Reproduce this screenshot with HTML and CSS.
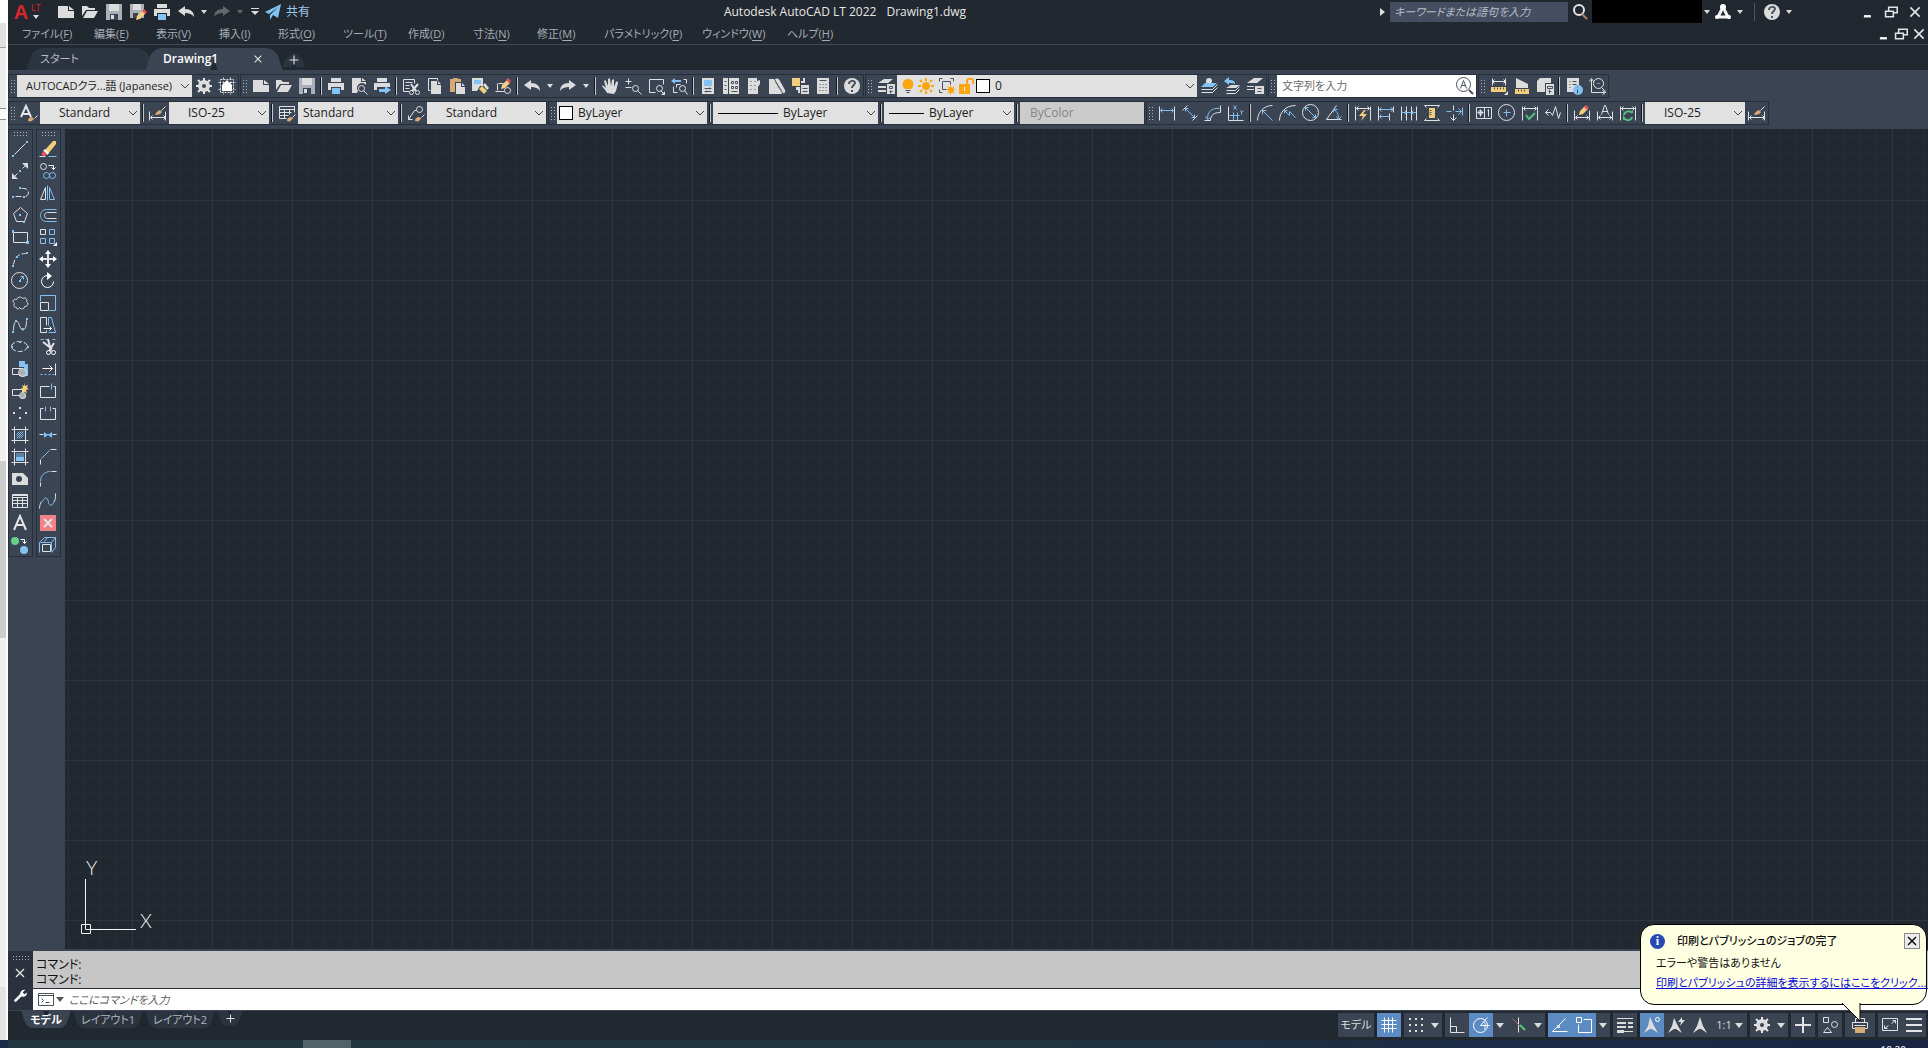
FILE: index.html
```html
<!DOCTYPE html>
<html lang="ja">
<head>
<meta charset="utf-8">
<title>Autodesk AutoCAD LT 2022 - Drawing1.dwg</title>
<link rel="stylesheet" href="styles.css">
</head>
<body>
<svg class="sprite" aria-hidden="true">
  <!-- files and printing -->
  <symbol id="new" viewBox="0 0 18 18"><path class="f" d="M1 3h10v5h6v7H1zM12 3l5 4h-5z"/></symbol>
  <symbol id="open" viewBox="0 0 18 18"><path class="f" d="M1 3h5l2 2h6v2H5l-4 6zM6 8h11l-4 7H2z"/></symbol>
  <symbol id="save" viewBox="0 0 18 18"><path class="g" d="M1 1h16v16H1z"/><path class="f" d="M4 1h10v7H4z"/><path class="d" d="M5 11h8v6H5z"/><path class="f" d="M6 12h3v4H6z"/></symbol>
  <symbol id="saveas" viewBox="0 0 18 18"><path class="g" d="M1 1h14v14H1z"/><path class="f" d="M4 1h8v6H4z"/><path class="d" d="M4 10h5v5H4z"/><path class="y" d="M7 17l1-4 6-6 3 3-6 6z"/><path class="r" d="M13 8l2-2 3 3-2 2z"/></symbol>
  <symbol id="print" viewBox="0 0 18 18"><path class="f" d="M4 1h10v4H4zM1 6h16v7h-3v-3H4v3H1z"/><path class="fb" d="M5 11h8v6H5z"/></symbol>
  <symbol id="preview" viewBox="0 0 18 18"><path class="f" d="M2 1h9v4h5v3a5 5 0 0 0-8 6l-1 2H2zM12 1l4 3h-4z"/><circle cx="11" cy="11" r="3"/><path d="M13 13l4 4"/></symbol>
  <symbol id="publish" viewBox="0 0 18 18"><path class="f" d="M4 1h10v4H4zM1 6h16v4H4v3H1z"/><path class="fb" d="M6 12h6V9l6 4-6 4v-2H6z"/></symbol>
  <!-- editing -->
  <symbol id="cut" viewBox="0 0 18 18"><path d="M1 2h11v4M1 2v12h6M3 5h7M3 8h4M3 11h4"/><path class="w2" d="M9 7l5 7M16 7l-6 7"/><circle cx="9" cy="15" r="2"/><circle cx="15" cy="15" r="2"/></symbol>
  <symbol id="copyclip" viewBox="0 0 18 18"><path d="M12 3V1H3v12h2"/><path class="f" d="M6 4h6v4h4v9H6zM13 4l3 3h-3z"/></symbol>
  <symbol id="paste" viewBox="0 0 18 18"><path class="t" d="M2 2h3V1h5v1h3v3H7v10H2z"/><path class="f" d="M8 6h5v4h4v7H8zM14 6l3 3h-3z"/></symbol>
  <symbol id="match" viewBox="0 0 18 18"><path class="f" d="M1 1h11v8H9l-3 5H1z"/><path class="fb" d="M3 3h7v4H3z"/><path class="y" d="M8 12l3-3 5 5-3 3z"/><path class="f" d="M12 8l2-2 4 5-2 2z"/></symbol>
  <symbol id="blockedit" viewBox="0 0 18 18"><path d="M4 6h5M3 6v7M1 14h9"/><circle cx="13" cy="13" r="3"/><path class="y" d="M7 12l1-4 5-5 3 3-5 5z"/><path class="r" d="M12 3l2-2 3 3-2 2z"/></symbol>
  <symbol id="undo" viewBox="0 0 18 18"><path class="f" d="M1 8l7-5v3c6 0 9 3 9 8-2-3-5-4-9-4v3z"/></symbol>
  <symbol id="redo" viewBox="0 0 18 18"><path class="f" d="M17 8l-7-5v3C4 6 1 9 1 14c2-3 5-4 9-4v3z"/></symbol>
  <symbol id="down" viewBox="0 0 8 8"><path class="f" d="M1 2h6L4 6z"/></symbol>
  <symbol id="custom" viewBox="0 0 10 10"><path class="f" d="M1 1h8v1H1zM1 4h8L5 8z"/></symbol>
  <symbol id="send" viewBox="0 0 18 18"><path class="fb" d="M1 9l16-8-3 14-5-3-3 5v-5l8-8-9 7z"/></symbol>
  <!-- viewing -->
  <symbol id="pan" viewBox="0 0 18 18"><path class="f" d="M6 16C5 13 2 11 1 9c1-1 2 0 4 2L3 4c1-1 2-1 2 0l2 5V2c1-1 2-1 2 0l1 7 1-6c1-1 2-1 2 0v7l2-5c1-1 2 0 2 1l-2 8-2 3z"/></symbol>
  <symbol id="zoompm" viewBox="0 0 18 18"><path d="M1 4h6M4 1v6M1 10h6M13 13l4 4"/><circle cx="11" cy="11" r="3"/></symbol>
  <symbol id="zoomwin" viewBox="0 0 18 18"><path d="M16 7V2H2v13h6M13 13l3 3"/><circle cx="12" cy="11" r="3"/><path class="f" d="M18 14v4h-4z"/></symbol>
  <symbol id="zoomprev" viewBox="0 0 18 18"><path d="M16 6V2h-3M3 9v6h4M14 13l3 4M6 10V7h4"/><circle cx="12" cy="11" r="3"/><path class="fb" d="M1 4l4-3v2h6v2H5v2z"/></symbol>
  <symbol id="props" viewBox="0 0 18 18"><path class="f" d="M3 1h12v16H3z"/><path class="fb" d="M5 3h8v6H5z"/><path class="k" d="M5 11h7M5 14h7M10 10v2M7 13v2"/></symbol>
  <symbol id="dcenter" viewBox="0 0 18 18"><path class="f" d="M1 1h5v16H1zM7 1h10v16H7z"/><path class="k" d="M2 4h2M2 8h2M2 12h2M9 4h2v2H9zM13 4h2v2h-2zM9 9h2v2H9zM13 9h2v2h-2zM9 14h6"/></symbol>
  <symbol id="palette" viewBox="0 0 18 18"><path class="f" d="M3 1h9v3l3-1v4l-2 3v7H3z"/><path class="k" d="M5 4h1M9 4h1M5 8h1M9 8h1M5 12h1M9 12h1"/></symbol>
  <symbol id="sheet" viewBox="0 0 18 18"><path class="f" d="M1 2h5l8 15H1zM7 2c3-1 4 0 5 2l5 9c1 4-2 4-4 2z"/><path class="k" d="M7 4l7 11"/></symbol>
  <symbol id="markup" viewBox="0 0 18 18"><path class="y" d="M1 1h8v8H1z"/><path class="f" d="M10 4h2V1h2v5h-4zM5 10h4v6H7v-3H5zM10 8h8v9h-8z"/><path class="k" d="M11 11h5M11 14h5"/></symbol>
  <symbol id="calc" viewBox="0 0 18 18"><path class="f" d="M3 1h12v16H3z"/><path class="k" d="M5 3h7M5 7h1M8 7h1M11 7h1M5 10h1M8 10h1M11 10h1M5 13h1M8 13h1M11 13h1"/></symbol>
  <symbol id="help" viewBox="0 0 18 18"><circle class="f" cx="9" cy="9" r="8"/><path class="k2" d="M6 7c0-4 6-4 6-1 0 2-3 2-3 5M9 13v2"/></symbol>
  <!-- layers -->
  <symbol id="layers" viewBox="0 0 18 18"><path class="f" d="M1 6l6-4h9l-5 4zM1 9h8v2H1zM1 13h8v2H1z"/><path class="f" d="M10 7h8v10h-8z"/><path class="k" d="M12 9h3v2h-3zM13 13v3M12 14h3"/></symbol>
  <symbol id="layers2" viewBox="0 0 18 18"><circle class="f" cx="9" cy="4" r="3"/><path class="fb" d="M1 10l4-4h12l-4 4z"/><path d="M1 12h11l5-5M1 15h11l5-5"/></symbol>
  <symbol id="layers3" viewBox="0 0 18 18"><path class="fb" d="M1 4l5-4v3c4 0 6 1 6 4-2-1-3-1-6-1v2z"/><path class="f" d="M3 11l5-3h9l-4 3z"/><path d="M3 13h9l4-4M3 16h9l4-4"/></symbol>
  <symbol id="layers4" viewBox="0 0 18 18"><path class="f" d="M1 6l7-5h9l-6 5zM1 9h7v1H1zM1 12h7v1H1zM9 9h9v8H9z"/><path class="k" d="M11 11h4M11 14h4"/></symbol>
  <symbol id="bulb" viewBox="0 0 18 18"><path class="o" d="M6 12C2 9 3 2 9 2s7 7 3 10z"/><path class="k" d="M6 13h5M7 15h3"/></symbol>
  <symbol id="sun" viewBox="0 0 18 18"><circle class="o" cx="9" cy="9" r="4"/><path class="os2" d="M9 1v3M9 14v3M1 9h3M14 9h3M3 3l2 2M13 13l2 2M15 3l-2 2M3 15l2-2"/></symbol>
  <symbol id="vpfreeze" viewBox="0 0 18 18"><path class="k" d="M1 4V1h3M12 1h3v3M1 12v3h3M4 4h8v4M4 4v8h4"/><circle class="o" cx="13" cy="13" r="3"/><path class="os" d="M12 7v10M8 12h9M9 9l7 7M16 9l-7 7"/></symbol>
  <symbol id="unlock" viewBox="0 0 18 18"><path class="o" d="M2 7h11v10H2z"/><path class="os2" d="M10 7V4c0-3 6-3 6 0v3"/><path class="e" d="M7 10h1v4H7z"/></symbol>
  <!-- measuring -->
  <symbol id="dist" viewBox="0 0 18 18"><path d="M2 1v7M15 1v7M2 4h13M4 2L2 4l2 2M13 2l2 2-2 2"/><path class="y" d="M1 10h15v5H1z"/><path class="k" d="M4 10v2M7 10v2M10 10v2M13 10v2"/><path class="f" d="M18 14v4h-4z"/></symbol>
  <symbol id="area" viewBox="0 0 18 18"><path class="f" d="M3 1l12 6v4H3z"/><path class="y" d="M2 12h14v5H2z"/><path class="k" d="M5 12v2M8 12v2M11 12v2"/></symbol>
  <symbol id="mass" viewBox="0 0 18 18"><path class="f" d="M1 4l3-3h11v5H9v9H1zM10 7h8v11h-8z"/><path class="k" d="M11 9h5v2h-5zM13 12v4M12 14h3"/></symbol>
  <symbol id="list" viewBox="0 0 18 18"><path class="f" d="M2 1h12v7l-5 7H2z"/><path class="k" d="M4 4h1M7 4h4M4 7h1M7 7h4M4 10h1"/><circle class="fb" cx="13" cy="13" r="5"/><path class="k" d="M12 12v4M12 9v1"/></symbol>
  <symbol id="locate" viewBox="0 0 18 18"><path d="M3 2v13h14M1 4l2-3 2 3M14 13l3 2-3 2M13 10l4 4"/><circle cx="10" cy="6" r="5"/><path class="b" d="M9 6h2"/></symbol>
  <!-- style toolbar -->
  <symbol id="tstyle" viewBox="0 0 18 18"><path class="w2" d="M1 13L6 2l5 11M3 10h7"/><path class="t" d="M8 17c0-3 2-4 4-4l2 2c-2 2-3 3-6 2z"/><path d="M14 14l3-3"/></symbol>
  <symbol id="dstyle" viewBox="0 0 18 18"><path d="M0 7v9M16 7v9M1 13h15M3 11l-2 2 2 2M14 11l2 2-2 2M12 6l4-4"/><path class="t" d="M6 11c1-3 3-4 5-5l2 2c-1 2-3 3-7 3z"/></symbol>
  <symbol id="tbstyle" viewBox="0 0 18 18"><path d="M8 14H1V2h15v6M1 5h15M1 8h12M1 11h9M6 5v9M11 5v5M14 13l3-3"/><path class="t" d="M9 17c0-3 2-4 4-4l2 1c-2 3-3 4-6 3z"/></symbol>
  <symbol id="mlstyle" viewBox="0 0 18 18"><path d="M1 15l6-9h2M1 11v4h4M14 13l3-3"/><circle cx="12" cy="5" r="3"/><path class="t" d="M8 17c0-3 2-4 4-4l2 1c-1 3-3 4-6 3z"/></symbol>
  <!-- dimensions -->
  <symbol id="dlin" viewBox="0 0 18 18"><path d="M1 2v14M16 2v14"/><path class="b" d="M2 6h13M4 4L2 6l2 2M13 4l2 2-2 2"/></symbol>
  <symbol id="dali" viewBox="0 0 18 18"><path d="M1 6l5-5M11 16l5-5"/><path class="b" d="M4 4l9 9M4 7V4h3M13 10v3h-3"/></symbol>
  <symbol id="darc" viewBox="0 0 18 18"><path d="M6 16c0-6 4-8 10-8M0 16h6M16 1v7"/><path class="b" d="M3 14C3 7 8 3 15 4M1 12l2 3 3-2"/></symbol>
  <symbol id="dord" viewBox="0 0 18 18"><path d="M1 2v14h15"/><path class="b" d="M6 8v8M2 11h10M10 8v8M6 1l3 4M9 1L6 5M13 6l1 2 2-2M14 8v2"/></symbol>
  <symbol id="drad" viewBox="0 0 18 18"><path d="M1 16C1 8 7 1 16 1"/><path class="b" d="M6 6l10 10M6 10V6h4"/></symbol>
  <symbol id="djog" viewBox="0 0 18 18"><path d="M0 16C0 8 6 1 16 1"/><path class="b" d="M5 6l5 5V7l6 6M5 9V6h3"/></symbol>
  <symbol id="ddia" viewBox="0 0 18 18"><circle cx="8" cy="8" r="8"/><path class="b" d="M3 3l10 10M3 6V3h3M13 10v3h-3"/></symbol>
  <symbol id="dang" viewBox="0 0 18 18"><path d="M11 1L1 15h15"/><path class="b" d="M8 5c4 2 5 5 5 9M8 8V5h4M11 12l2 3 3-3"/></symbol>
  <symbol id="dquick" viewBox="0 0 18 18"><path d="M1 2v14M16 2v14M2 4h13M4 2L2 4l2 2M13 2l2 2-2 2"/><path class="y" d="M10 6l-5 6h4l-2 5 6-7H9l3-4z"/></symbol>
  <symbol id="dbase" viewBox="0 0 18 18"><path d="M1 2v14M16 2v6M12 9v7"/><path class="b" d="M2 5h14M2 12h10M4 3L2 5l2 2M4 10l-2 2 2 2M13 3l3 2-3 2"/></symbol>
  <symbol id="dcont" viewBox="0 0 18 18"><path d="M1 2v14M6 2v14M11 2v14M16 2v14"/><path class="b" d="M1 8h15M4 6l2 2-2 2M13 6l-2 2 2 2"/></symbol>
  <symbol id="dspace" viewBox="0 0 18 18"><path d="M1 1h15M1 16h15M3 3L1 1M14 3l2-2M3 14l-2 2M14 14l2 2"/><path class="y" d="M6 4h6v10H6z"/><path class="k" d="M6 6h2M6 8h2M6 10h2"/></symbol>
  <symbol id="dbreak" viewBox="0 0 18 18"><path d="M7 1v5M7 10v6M4 13l3 3 3-3"/><path class="b" d="M0 7h5M9 7h6M12 4l3 3-3 3M16 3v8"/></symbol>
  <symbol id="dtol" viewBox="0 0 18 18"><path d="M1 3h15v11H1zM9 3v11M2 8h6M5 5v7M12 6l1-1v7"/><circle cx="5" cy="8" r="2"/></symbol>
  <symbol id="dcen" viewBox="0 0 18 18"><circle cx="8" cy="8" r="8"/><path class="b" d="M8 5v7M5 8h7"/></symbol>
  <symbol id="dinsp" viewBox="0 0 18 18"><path d="M1 2v14M16 2v14M2 4h13M4 2L2 4l2 2M13 2l2 2-2 2"/><path class="gr" d="M5 11l3 4 6-6"/></symbol>
  <symbol id="djogl" viewBox="0 0 18 18"><path d="M1 8h5l2 3 3-9 3 12 2-6M4 5L1 8l3 3"/></symbol>
  <symbol id="dedit" viewBox="0 0 18 18"><path d="M1 6v10M16 6v10M2 13h13M4 11l-2 2 2 2M13 11l2 2-2 2"/><path class="y" d="M6 11l1-4 5-5 3 3-5 5z"/><path class="r" d="M11 3l2-2 3 3-2 2z"/></symbol>
  <symbol id="dtedit" viewBox="0 0 18 18"><path d="M1 7v9M16 7v9M2 13h13M4 11l-2 2 2 2M13 11l2 2-2 2M5 10l3-9h1l3 9M6 7h5"/></symbol>
  <symbol id="dupd" viewBox="0 0 18 18"><path d="M1 2v14M16 2v14M2 4h13M4 2L2 4l2 2M13 2l2 2-2 2"/><path class="gr" d="M5 11c1-5 7-4 8-2V7M13 13c-1 4-6 4-8 1v2"/></symbol>
  <!-- draw -->
  <symbol id="line" viewBox="0 0 18 18"><path d="M3 14L14 3"/><path class="fb" d="M1 15h2v2H1zM15 1h2v2h-2z"/></symbol>
  <symbol id="xline" viewBox="0 0 18 18"><path d="M3 14l3-3M11 6l3-3"/><path class="f" d="M1 17v-6l6 6zM17 1v6l-6-6z"/><path class="fb" d="M8 8h2v2H8z"/></symbol>
  <symbol id="pline" viewBox="0 0 18 18"><path d="M4 12h7M10 4c9-1 8 7 4 8" stroke-dasharray="6 2"/><path class="fb" d="M1 12h2v2H1zM8 3h2v2H8zM12 12h2v2h-2z"/></symbol>
  <symbol id="polygon" viewBox="0 0 18 18"><path d="M9 1l7 6-3 8H5L2 7z"/><path class="fb" d="M8 8h2v2H8zM12 15h2v2h-2z"/></symbol>
  <symbol id="rect" viewBox="0 0 18 18"><path d="M2 4h14v10H2z"/><path class="fb" d="M1 2h2v3H1zM15 13h3v3h-3z"/></symbol>
  <symbol id="arc" viewBox="0 0 18 18"><path d="M2 14C3 7 7 3 14 3" stroke-dasharray="5 2"/><path class="fb" d="M1 15h2v2H1zM5 6h2v2H5zM15 2h2v2h-2z"/></symbol>
  <symbol id="circle" viewBox="0 0 18 18"><circle cx="8" cy="8" r="8"/><path class="b" d="M8 8l4-4M9 4h3v3"/><path class="fb" d="M8 8h2v2H8z"/></symbol>
  <symbol id="cloud" viewBox="0 0 18 18"><path d="M5 13c-3 0-3-3-2-4-3-2-1-5 2-4 1-3 5-3 6-1 4-2 5 2 4 3 3 2 1 5-2 5 0 3-4 3-5 1-1 2-3 2-3 0z"/></symbol>
  <symbol id="spline" viewBox="0 0 18 18"><path d="M2 14C2 4 6 2 8 9s7 6 7-5"/><path class="fb" d="M1 15h2v2H1zM4 4h2v2H4zM11 12h2v2h-2zM15 2h2v2h-2z"/></symbol>
  <symbol id="ellipse" viewBox="0 0 18 18"><ellipse cx="8" cy="8" rx="8" ry="5" stroke-dasharray="5 2"/><path class="fb" d="M8 3h2v2H8zM0 8h2v2H0zM16 8h2v2h-2z"/></symbol>
  <symbol id="insert" viewBox="0 0 18 18"><path class="fb" d="M8 1h6v3h3v12H8z"/><path class="d" d="M1 7h12v8H1z"/><path d="M1 8h10v6H1z"/><circle class="g" cx="12" cy="13" r="4"/><circle cx="11" cy="12" r="4"/></symbol>
  <symbol id="block" viewBox="0 0 18 18"><path d="M1 7h10v6H1z"/><circle class="g" cx="12" cy="14" r="3"/><circle cx="11" cy="13" r="3"/><path class="y" d="M13 1l1 3 3-1-1 3 2 1-3 1 1 3-3-1-2 1 1-3-3-1 3-1-1-3 2 1z"/></symbol>
  <symbol id="point" viewBox="0 0 18 18"><path class="f" d="M8 3h2v2H8zM2 8h2v2H2zM14 8h2v2h-2zM8 13h2v2H8z"/></symbol>
  <symbol id="hatch" viewBox="0 0 18 18"><path d="M3 0v17M14 0v17M0 3h17M0 14h17"/><path class="b" d="M5 8l3-3M5 10l5-5M5 12l7-7M7 12l5-5M9 12l3-3"/></symbol>
  <symbol id="grad" viewBox="0 0 18 18"><path d="M3 0v17M14 0v17M0 3h17M0 14h17"/><path class="fb" d="M5 5h8v8H5z"/><path class="d" opacity=".5" d="M5 5h8v4H5z"/></symbol>
  <symbol id="region" viewBox="0 0 18 18"><path class="f" d="M1 3h11l5 5v7H1z"/><circle class="d" cx="8" cy="9" r="3"/></symbol>
  <symbol id="table" viewBox="0 0 18 18"><path d="M1 2h15v13H1zM1 5h15M1 8h15M1 11h15M6 5v10M11 5v10M1 3h15"/></symbol>
  <symbol id="mtext" viewBox="0 0 18 18"><path class="w2" d="M3 16L9 2l6 14M5 11h8"/></symbol>
  <symbol id="addsel" viewBox="0 0 18 18"><circle class="grf" cx="4" cy="5" r="4"/><circle class="fb" cx="13" cy="14" r="4"/><path class="w" d="M9 3h4v4M11 5l2 2 2-2"/></symbol>
  <!-- modify -->
  <symbol id="erase" viewBox="0 0 18 18"><path class="y" d="M6 10l8-9h3v3l-8 10z"/><path class="e" d="M4 11l2-2 4 4-2 2z"/><path class="r" d="M3 13l2-2 3 3-2 2c-3 0-4-1-3-3z"/><path d="M0 16h6"/><path class="b" d="M9 16h8"/></symbol>
  <symbol id="copy" viewBox="0 0 18 18"><circle cx="4" cy="4" r="3"/><path class="w" d="M9 3h5v4M12 5l2 2 2-2"/><circle class="b" cx="7" cy="13" r="3"/><circle class="b" cx="13" cy="13" r="3"/></symbol>
  <symbol id="mirror" viewBox="0 0 18 18"><path d="M6 3v12H1z"/><path class="b" d="M10 3v12h5z"/><path class="b" d="M8 1v15"/></symbol>
  <symbol id="offset" viewBox="0 0 18 18"><path class="b" d="M17 3H7c-8 0-8 12 0 12h10"/><path d="M17 6H8c-4 0-4 6 0 6h9"/></symbol>
  <symbol id="array" viewBox="0 0 18 18"><path d="M1 1h5v5H1z"/><path class="b" d="M10 1h5v5h-5zM1 10h5v5H1zM10 10h5v5h-5z"/><path class="e" d="M18 14v4h-4z"/></symbol>
  <symbol id="move" viewBox="0 0 18 18"><path class="w2" d="M9 2v14M2 9h14"/><path class="e" d="M9 0l3 4H6zM9 18l3-4H6zM0 9l4-3v6zM18 9l-4-3v6z"/></symbol>
  <symbol id="rotate" viewBox="0 0 18 18"><path class="w" d="M8 3a6 6 0 1 0 6 6"/><path class="e" d="M8 0l5 4-5 4z"/></symbol>
  <symbol id="scale" viewBox="0 0 18 18"><path class="b" d="M1 7V1h15v15h-6"/><path d="M1 8h8v8H1z"/></symbol>
  <symbol id="stretch" viewBox="0 0 18 18"><path d="M7 9V1H1v15h6v-2"/><path class="b" d="M9 9V1h3l4 15H9"/><path class="w" d="M4 12h8M10 10l2 2-2 2"/></symbol>
  <symbol id="trim" viewBox="0 0 18 18"><path class="b" d="M1 1h3M6 1h2M13 1h3"/><path class="w2" d="M9 1l3 12M4 4l9 7M15 5l-5 8"/><circle class="w" cx="9" cy="14" r="2"/><circle class="w" cx="14" cy="14" r="2"/></symbol>
  <symbol id="extend" viewBox="0 0 18 18"><path d="M16 3v12"/><path class="w" d="M3 8h10M10 5l3 3-3 3"/><path class="b" d="M1 14h14" stroke-dasharray="2 2"/></symbol>
  <symbol id="breakpt" viewBox="0 0 18 18"><path d="M10 4H1v11h15V4h-2"/><path class="b" d="M12 1v6"/></symbol>
  <symbol id="break" viewBox="0 0 18 18"><path d="M4 4H1v11h15V4h-3"/><path class="b" d="M6 2v5M11 2v5"/></symbol>
  <symbol id="join" viewBox="0 0 18 18"><path d="M0 8h4M13 8h4"/><path class="b" d="M4 8h10"/><path class="fb" d="M5 6l4 3-4 3zM13 6L9 9l4 3z"/></symbol>
  <symbol id="chamfer" viewBox="0 0 18 18"><path d="M1 16v-5M11 1h6"/><path class="b" d="M2 10l8-8"/></symbol>
  <symbol id="fillet" viewBox="0 0 18 18"><path d="M1 16v-4M12 1h5"/><path class="b" d="M1 11c0-6 4-10 10-10"/></symbol>
  <symbol id="blend" viewBox="0 0 18 18"><path d="M0 16c0-3 1-5 2-7M16 1c0 4 0 7-2 9"/><path class="b" d="M3 9c3-7 6-2 6 1s4 4 5 0"/></symbol>
  <symbol id="explode" viewBox="0 0 18 18"><path class="rx" d="M1 1h16v16H1z"/><path class="w2" d="M5 5l8 8M13 5l-8 8"/></symbol>
  <symbol id="cube" viewBox="0 0 18 18"><path d="M3 8h8v7H3z"/><path class="b" d="M0 16V6l5-5h11v10l-4 5M1 6h11v9M12 6l4-5M5 5l3-4"/></symbol>
  <!-- misc -->
  <symbol id="gear" viewBox="0 0 18 18"><circle class="ring" cx="9" cy="9" r="4"/><path class="w2" d="M9 1v3M9 14v3M1 9h3M14 9h3M3 3l3 3M12 12l3 3M15 3l-3 3M3 15l3-3"/></symbol>
  <symbol id="wspace" viewBox="0 0 18 18"><path d="M2 2h13v13H2z" stroke-dasharray="2 1"/><path d="M5 0v17M12 0v17M0 5h17M0 12h17" stroke-dasharray="2 2"/><path class="e" d="M9 3l5 5v6H4V8z"/></symbol>
  <symbol id="wrench" viewBox="0 0 18 18"><path class="w3" d="M3 15l8-8"/><path class="e" d="M10 9C8 5 11 1 15 2l-3 3 2 2 3-2c0 4-4 6-7 4z"/></symbol>
  <symbol id="cross" viewBox="0 0 18 18"><path class="w2" d="M3 3l12 12M15 3L3 15"/></symbol>
  <symbol id="restore" viewBox="0 0 18 18"><path class="w2" d="M6 7V3h11v7h-4M2 8h10v7H2z"/></symbol>
  <symbol id="min" viewBox="0 0 18 18"><path class="e" d="M5 13h9v3H5z"/></symbol>
  <symbol id="plus" viewBox="0 0 18 18"><path class="w2" d="M9 1v16M1 9h16"/></symbol>
  <symbol id="lens" viewBox="0 0 18 18"><circle class="w2" cx="8" cy="7" r="5"/><path class="tl" d="M11 11l5 5"/></symbol>
  <symbol id="alens" viewBox="0 0 18 18"><circle class="k" cx="7" cy="7" r="7"/><path class="k" d="M4 11l3-8 3 8M5 8h4"/><path class="k2" d="M13 13l4 4"/></symbol>
  <symbol id="adsk" viewBox="0 0 18 18"><path class="w3" d="M9 4L4 14h10z"/><circle class="e" cx="9" cy="4" r="3"/><circle class="e" cx="3" cy="14" r="2"/><circle class="e" cx="15" cy="14" r="2"/></symbol>
  <!-- status bar -->
  <symbol id="sgrid" viewBox="0 0 18 18"><path d="M4 1v15M8 1v15M12 1v15M1 4h15M1 8h15M1 12h15"/></symbol>
  <symbol id="ssnap" viewBox="0 0 18 18"><path class="f" d="M2 2h2v2H2zM8 2h2v2H8zM14 2h2v2h-2zM2 8h2v2H2zM8 8h2v2H8zM14 8h2v2h-2zM2 14h2v2H2zM8 14h2v2H8zM14 14h2v2h-2z"/></symbol>
  <symbol id="sortho" viewBox="0 0 18 18"><path d="M2 1v15h14M2 10h6v6"/></symbol>
  <symbol id="spolar" viewBox="0 0 18 18"><circle cx="8" cy="9" r="7"/><path d="M8 9l7-8M8 9h9M11 5c2 2 2 3 1 8"/></symbol>
  <symbol id="siso" viewBox="0 0 18 18"><path d="M8 1v15"/><path class="rs" d="M2 2l12 12"/><path class="gr" d="M10 9l5 5"/></symbol>
  <symbol id="strack" viewBox="0 0 18 18"><path d="M1 15h15M1 15L14 2"/><path class="f" d="M6 9h3v3H6z"/></symbol>
  <symbol id="sosnap" viewBox="0 0 18 18"><path d="M8 3h8v13H3V8"/><path d="M1 1h5v5H1z"/></symbol>
  <symbol id="slwt" viewBox="0 0 18 18"><path class="f" d="M1 2h16v1H1zM1 6h9v2H1zM12 6h5v2h-5zM1 10h9v2H1zM12 10h5v2h-5zM1 14h7v3H1zM8 15h9v1H8z"/></symbol>
  <symbol id="sann" viewBox="0 0 18 18"><path class="f" d="M7 1l4 9 4 7-6-4H7l-6 4 4-7z"/><circle cx="14" cy="3" r="2"/></symbol>
  <symbol id="sann2" viewBox="0 0 18 18"><path class="f" d="M7 2l4 8 4 7-6-4H7l-6 4 4-7zM15 1l-4 5h3l-1 4 5-6h-3z"/></symbol>
  <symbol id="sann3" viewBox="0 0 18 18"><path class="f" d="M9 1l3 9 4 7-6-4H8l-6 4 4-7z"/></symbol>
  <symbol id="siso2" viewBox="0 0 18 18"><path d="M2 1h5v5H2zM6 11l4 5H2z"/><circle cx="13" cy="8" r="3"/></symbol>
  <symbol id="splot" viewBox="0 0 18 18"><path d="M4 6V2h9v4M4 12H1V6h15v6h-3M3 9h11"/><path class="t" d="M4 11h10v6H4z"/></symbol>
  <symbol id="sfull" viewBox="0 0 18 18"><path d="M1 2h15v12H1zM10 7l4-3M11 4h3v3M7 9l-4 3M3 9v3h3"/></symbol>
  <symbol id="smenu" viewBox="0 0 18 18"><path class="w2" d="M1 3h16M1 9h16M1 15h16"/></symbol>
  <symbol id="prompt" viewBox="0 0 18 14"><path class="k" d="M1 0h15v12H1zM1 2h15M4 5l2 2-2 2M8 9h4"/></symbol>
</svg>

<div class="desktop">
  <div class="workarea">
    <div class="behind" aria-hidden="true"><i class="b1"></i><i class="b2"></i><i class="b3"></i><i class="b4"></i><i class="b5"></i><i class="b6"></i><i class="b7"></i></div>

    <div class="app">
      <header class="title">
        <div class="qat">
          <button class="logo" aria-label="アプリケーション メニュー"><b>A</b><span>LT<svg class="dn"><use href="#down"/></svg></span></button>
          <button class="q" aria-label="新規"><svg><use href="#new"/></svg></button>
          <button class="q" aria-label="開く"><svg><use href="#open"/></svg></button>
          <button class="q" aria-label="保存"><svg><use href="#save"/></svg></button>
          <button class="q" aria-label="名前を付けて保存"><svg><use href="#saveas"/></svg></button>
          <button class="q" aria-label="印刷"><svg><use href="#print"/></svg></button>
          <button class="q" aria-label="元に戻す"><svg><use href="#undo"/></svg></button>
          <button class="a" aria-label="元に戻す一覧"><svg class="dn"><use href="#down"/></svg></button>
          <button class="q dim" aria-label="やり直し"><svg><use href="#redo"/></svg></button>
          <button class="a dim" aria-label="やり直し一覧"><svg class="dn"><use href="#down"/></svg></button>
          <button class="a wide" aria-label="カスタマイズ"><svg class="cu"><use href="#custom"/></svg></button>
          <button class="share"><svg><use href="#send"/></svg>共有</button>
        </div>
        <h1>Autodesk AutoCAD LT 2022<span>Drawing1.dwg</span></h1>
        <div class="info">
          <span class="tri"></span>
          <input class="kw" type="text" aria-label="検索" placeholder="キーワードまたは語句を入力">
          <button class="q" aria-label="検索実行"><svg><use href="#lens"/></svg></button>
          <span class="masked"></span>
          <button class="a s" aria-label="アカウント"><svg class="dn"><use href="#down"/></svg></button>
          <button class="q" aria-label="App Store"><svg><use href="#adsk"/></svg></button>
          <button class="a s" aria-label="アプリ"><svg class="dn"><use href="#down"/></svg></button>
          <span class="vr"></span>
          <button class="q" aria-label="ヘルプ"><svg><use href="#help"/></svg></button>
          <button class="a s" aria-label="ヘルプ一覧"><svg class="dn"><use href="#down"/></svg></button>
        </div>
        <div class="win"><button aria-label="最小化"><svg><use href="#min"/></svg></button><button aria-label="元のサイズ"><svg><use href="#restore"/></svg></button><button aria-label="閉じる"><svg><use href="#cross"/></svg></button></div>
      </header>

      <nav class="menu">
        <div class="items">
          <button>ファイル(<u>F</u>)</button><button>編集(<u>E</u>)</button><button>表示(<u>V</u>)</button><button>挿入(<u>I</u>)</button><button>形式(<u>O</u>)</button><button>ツール(<u>T</u>)</button><button>作成(<u>D</u>)</button><button>寸法(<u>N</u>)</button><button>修正(<u>M</u>)</button><button>パラメトリック(<u>P</u>)</button><button>ウィンドウ(<u>W</u>)</button><button>ヘルプ(<u>H</u>)</button>
        </div>
        <div class="docwin"><button aria-label="図面を最小化"><svg><use href="#min"/></svg></button><button aria-label="図面を元のサイズに"><svg><use href="#restore"/></svg></button><button aria-label="図面を閉じる"><svg><use href="#cross"/></svg></button></div>
      </nav>

      <div class="tabs">
        <button class="tab start">スタート</button>
        <button class="tab on">Drawing1<svg><use href="#cross"/></svg></button>
        <button class="tab add" aria-label="新しい図面"><svg><use href="#plus"/></svg></button>
      </div>

      <div class="bars">
        <div class="row">
          <div class="tb"><i class="grip"></i>
            <select class="sel small w175" aria-label="ワークスペース"><option>AUTOCADクラ...語 (Japanese)</option></select>
            <button class="t" aria-label="ワークスペース設定"><svg><use href="#gear"/></svg></button>
            <button class="t" aria-label="マイ ワークスペース"><svg><use href="#wspace"/></svg></button>
          </div>
          <div class="tb"><i class="grip"></i>
            <button class="t" aria-label="新規作成"><svg><use href="#new"/></svg></button>
            <button class="t" aria-label="開く"><svg><use href="#open"/></svg></button>
            <button class="t" aria-label="上書き保存"><svg><use href="#save"/></svg></button><i class="sep"></i>
            <button class="t" aria-label="印刷"><svg><use href="#print"/></svg></button>
            <button class="t" aria-label="印刷プレビュー"><svg><use href="#preview"/></svg></button>
            <button class="t" aria-label="パブリッシュ"><svg><use href="#publish"/></svg></button><i class="sep"></i>
            <button class="t" aria-label="切り取り"><svg><use href="#cut"/></svg></button>
            <button class="t" aria-label="コピー"><svg><use href="#copyclip"/></svg></button>
            <button class="t" aria-label="貼り付け"><svg><use href="#paste"/></svg></button>
            <button class="t" aria-label="プロパティコピー"><svg><use href="#match"/></svg></button>
            <button class="t" aria-label="ブロックエディタ"><svg><use href="#blockedit"/></svg></button><i class="sep"></i>
            <button class="t" aria-label="元に戻す"><svg><use href="#undo"/></svg></button><button class="ta" aria-label="元に戻す一覧"><svg class="dn"><use href="#down"/></svg></button>
            <button class="t" aria-label="やり直し"><svg><use href="#redo"/></svg></button><button class="ta" aria-label="やり直し一覧"><svg class="dn"><use href="#down"/></svg></button><i class="sep"></i>
            <button class="t" aria-label="画面移動"><svg><use href="#pan"/></svg></button>
            <button class="t" aria-label="ズーム"><svg><use href="#zoompm"/></svg></button>
            <button class="t" aria-label="窓ズーム"><svg><use href="#zoomwin"/></svg></button>
            <button class="t" aria-label="前画面ズーム"><svg><use href="#zoomprev"/></svg></button><i class="sep"></i>
            <button class="t" aria-label="プロパティ"><svg><use href="#props"/></svg></button>
            <button class="t" aria-label="DesignCenter"><svg><use href="#dcenter"/></svg></button>
            <button class="t" aria-label="ツールパレット"><svg><use href="#palette"/></svg></button>
            <button class="t" aria-label="シートセット"><svg><use href="#sheet"/></svg></button>
            <button class="t" aria-label="マークアップ"><svg><use href="#markup"/></svg></button>
            <button class="t" aria-label="計算機"><svg><use href="#calc"/></svg></button><i class="sep"></i>
            <button class="t" aria-label="ヘルプ"><svg><use href="#help"/></svg></button>
          </div>
          <div class="tb"><i class="grip"></i>
            <button class="t" aria-label="画層プロパティ管理"><svg><use href="#layers"/></svg></button>
            <label class="combo w300"><svg><use href="#bulb"/></svg><svg><use href="#sun"/></svg><svg class="gapl"><use href="#vpfreeze"/></svg><svg><use href="#unlock"/></svg><i class="sw"></i><select class="sel" aria-label="画層"><option>0</option></select></label>
            <button class="t" aria-label="現在層に設定"><svg><use href="#layers2"/></svg></button>
            <button class="t" aria-label="直前の画層"><svg><use href="#layers3"/></svg></button>
            <button class="t" aria-label="画層状態管理"><svg><use href="#layers4"/></svg></button>
          </div>
          <div class="tb"><i class="grip"></i>
            <label class="find"><input type="text" aria-label="文字列検索" placeholder="文字列を入力"><svg><use href="#alens"/></svg></label>
          </div>
          <div class="tb"><i class="grip"></i>
            <button class="t" aria-label="距離"><svg><use href="#dist"/></svg></button>
            <button class="t" aria-label="面積"><svg><use href="#area"/></svg></button>
            <button class="t" aria-label="マスプロパティ"><svg><use href="#mass"/></svg></button><i class="sep"></i>
            <button class="t" aria-label="オブジェクト情報"><svg><use href="#list"/></svg></button>
            <button class="t" aria-label="位置表示"><svg><use href="#locate"/></svg></button>
          </div>
        </div>

        <div class="row">
          <div class="tb"><i class="grip"></i>
            <button class="t" aria-label="文字スタイル管理"><svg><use href="#tstyle"/></svg></button>
            <select class="sel in w100" aria-label="文字スタイル"><option>Standard</option></select><i class="sep"></i>
            <button class="t" aria-label="寸法スタイル管理"><svg><use href="#dstyle"/></svg></button>
            <select class="sel in w100" aria-label="寸法スタイル"><option>ISO-25</option></select><i class="sep"></i>
            <button class="t" aria-label="表スタイル管理"><svg><use href="#tbstyle"/></svg></button>
            <select class="sel near w100" aria-label="表スタイル"><option>Standard</option></select><i class="sep"></i>
            <button class="t" aria-label="マルチ引出線スタイル管理"><svg><use href="#mlstyle"/></svg></button>
            <select class="sel in w119" aria-label="マルチ引出線スタイル"><option>Standard</option></select>
          </div>
          <div class="tb"><i class="grip"></i>
            <label class="combo w150"><i class="sw"></i><select class="sel" aria-label="色"><option>ByLayer</option></select></label><i class="sep"></i>
            <label class="combo w165"><i class="ln"></i><select class="sel" aria-label="線種"><option>ByLayer</option></select></label><i class="sep"></i>
            <label class="combo w130"><i class="ln short"></i><select class="sel" aria-label="線の太さ"><option>ByLayer</option></select></label><i class="sep"></i>
            <select class="sel off w124" aria-label="印刷スタイル" disabled><option>ByColor</option></select>
          </div>
          <div class="tb"><i class="grip"></i>
            <button class="t" aria-label="長さ寸法"><svg><use href="#dlin"/></svg></button>
            <button class="t" aria-label="平行寸法"><svg><use href="#dali"/></svg></button>
            <button class="t" aria-label="弧長寸法"><svg><use href="#darc"/></svg></button>
            <button class="t" aria-label="座標寸法"><svg><use href="#dord"/></svg></button><i class="sep"></i>
            <button class="t" aria-label="半径寸法"><svg><use href="#drad"/></svg></button>
            <button class="t" aria-label="折り曲げ半径"><svg><use href="#djog"/></svg></button>
            <button class="t" aria-label="直径寸法"><svg><use href="#ddia"/></svg></button>
            <button class="t" aria-label="角度寸法"><svg><use href="#dang"/></svg></button><i class="sep"></i>
            <button class="t" aria-label="クイック寸法"><svg><use href="#dquick"/></svg></button>
            <button class="t" aria-label="並列寸法"><svg><use href="#dbase"/></svg></button>
            <button class="t" aria-label="直列寸法"><svg><use href="#dcont"/></svg></button>
            <button class="t" aria-label="寸法線間隔"><svg><use href="#dspace"/></svg></button>
            <button class="t" aria-label="寸法マスク"><svg><use href="#dbreak"/></svg></button><i class="sep"></i>
            <button class="t" aria-label="幾何公差"><svg><use href="#dtol"/></svg></button>
            <button class="t" aria-label="中心マーク"><svg><use href="#dcen"/></svg></button>
            <button class="t" aria-label="検査"><svg><use href="#dinsp"/></svg></button>
            <button class="t" aria-label="折り曲げ線"><svg><use href="#djogl"/></svg></button><i class="sep"></i>
            <button class="t" aria-label="寸法編集"><svg><use href="#dedit"/></svg></button>
            <button class="t" aria-label="寸法値位置"><svg><use href="#dtedit"/></svg></button>
            <button class="t" aria-label="寸法更新"><svg><use href="#dupd"/></svg></button><i class="sep"></i>
            <select class="sel in w100" aria-label="現在の寸法スタイル"><option>ISO-25</option></select>
            <button class="t" aria-label="寸法スタイル管理"><svg><use href="#dstyle"/></svg></button>
          </div>
        </div>
      </div>

      <main class="stage">
        <aside class="side">
          <div class="vtb"><i class="vgrip"></i>
            <button aria-label="線分"><svg><use href="#line"/></svg></button><button aria-label="構築線"><svg><use href="#xline"/></svg></button><button aria-label="ポリライン"><svg><use href="#pline"/></svg></button><button aria-label="ポリゴン"><svg><use href="#polygon"/></svg></button><button aria-label="長方形"><svg><use href="#rect"/></svg></button><button aria-label="円弧"><svg><use href="#arc"/></svg></button><button aria-label="円"><svg><use href="#circle"/></svg></button><button aria-label="雲マーク"><svg><use href="#cloud"/></svg></button><button aria-label="スプライン"><svg><use href="#spline"/></svg></button><button aria-label="楕円"><svg><use href="#ellipse"/></svg></button><button aria-label="ブロック挿入"><svg><use href="#insert"/></svg></button><button aria-label="ブロック作成"><svg><use href="#block"/></svg></button><button aria-label="点"><svg><use href="#point"/></svg></button><button aria-label="ハッチング"><svg><use href="#hatch"/></svg></button><button aria-label="グラデーション"><svg><use href="#grad"/></svg></button><button aria-label="リージョン"><svg><use href="#region"/></svg></button><button aria-label="表"><svg><use href="#table"/></svg></button><button aria-label="マルチテキスト"><svg><use href="#mtext"/></svg></button><button aria-label="類似オブジェクト"><svg><use href="#addsel"/></svg></button>
          </div>
          <div class="vtb"><i class="vgrip"></i>
            <button aria-label="削除"><svg><use href="#erase"/></svg></button><button aria-label="複写"><svg><use href="#copy"/></svg></button><button aria-label="鏡像"><svg><use href="#mirror"/></svg></button><button aria-label="オフセット"><svg><use href="#offset"/></svg></button><button aria-label="配列複写"><svg><use href="#array"/></svg></button><button aria-label="移動"><svg><use href="#move"/></svg></button><button aria-label="回転"><svg><use href="#rotate"/></svg></button><button aria-label="尺度変更"><svg><use href="#scale"/></svg></button><button aria-label="ストレッチ"><svg><use href="#stretch"/></svg></button><button aria-label="トリム"><svg><use href="#trim"/></svg></button><button aria-label="延長"><svg><use href="#extend"/></svg></button><button aria-label="点で部分削除"><svg><use href="#breakpt"/></svg></button><button aria-label="部分削除"><svg><use href="#break"/></svg></button><button aria-label="結合"><svg><use href="#join"/></svg></button><button aria-label="面取り"><svg><use href="#chamfer"/></svg></button><button aria-label="フィレット"><svg><use href="#fillet"/></svg></button><button aria-label="ブレンド"><svg><use href="#blend"/></svg></button><button aria-label="分解"><svg><use href="#explode"/></svg></button><button aria-label="表示順序"><svg><use href="#cube"/></svg></button>
          </div>
        </aside>
        <section class="canvas" aria-label="作図領域">
          <svg class="ucs" viewBox="0 0 76 80"><path d="M5.500 22v50.500H56M1.500 67.500h9v9h-9z"/><text x="6" y="18">Y</text><text x="60" y="71">X</text></svg>
        </section>
      </main>

      <section class="cmd">
        <div class="handle"><i class="vgrip two"></i><button aria-label="コマンドラインを閉じる"><svg class="x"><use href="#cross"/></svg></button><button aria-label="カスタマイズ"><svg><use href="#wrench"/></svg></button></div>
        <div class="lines">
          <div class="hist"><p>コマンド:</p><p>コマンド:</p></div>
          <label class="ask"><svg class="pr"><use href="#prompt"/></svg><span class="tridn"></span><input type="text" aria-label="コマンド入力" placeholder="ここにコマンドを入力"></label>
        </div>
      </section>

      <footer class="status">
        <div class="ltabs"><button class="lt on">モデル</button><button class="lt">レイアウト1</button><button class="lt">レイアウト2</button><button class="lt more" aria-label="レイアウトを追加"><svg><use href="#plus"/></svg></button></div>
        <div class="sb">
          <div><button class="model">モデル</button></div>
          <div><button class="act" aria-label="グリッド"><svg><use href="#sgrid"/></svg></button></div>
          <div><button aria-label="スナップ"><svg><use href="#ssnap"/></svg></button><button class="sa" aria-label="スナップ設定"><i class="tridn"></i></button></div>
          <div><button aria-label="直交モード"><svg><use href="#sortho"/></svg></button><button class="act" aria-label="極トラッキング"><svg><use href="#spolar"/></svg></button><button class="sa" aria-label="極設定"><i class="tridn"></i></button><button aria-label="アイソメ"><svg><use href="#siso"/></svg></button><button class="sa" aria-label="アイソメ設定"><i class="tridn"></i></button></div>
          <div><button class="act" aria-label="スナップトラッキング"><svg><use href="#strack"/></svg></button><button class="act" aria-label="オブジェクトスナップ"><svg><use href="#sosnap"/></svg></button><button class="sa" aria-label="スナップ一覧"><i class="tridn"></i></button></div>
          <div><button aria-label="線の太さ"><svg><use href="#slwt"/></svg></button></div>
          <div><button class="act" aria-label="注釈表示"><svg><use href="#sann"/></svg></button><button aria-label="自動尺度"><svg><use href="#sann2"/></svg></button><button aria-label="注釈尺度"><svg><use href="#sann3"/></svg></button><button class="ratio">1:1<i class="tridn"></i></button></div>
          <div><button aria-label="ワークスペース切り替え"><svg><use href="#gear"/></svg></button><button class="sa" aria-label="ワークスペース一覧"><i class="tridn"></i></button></div>
          <div><button aria-label="注釈モニター"><svg><use href="#plus"/></svg></button></div>
          <div><button aria-label="オブジェクト選択表示"><svg><use href="#siso2"/></svg></button></div>
          <div class="plotbox"><button class="plot" aria-label="印刷の詳細"><svg><use href="#splot"/></svg></button>
            <div class="balloon" role="status">
              <header><i class="inf">i</i><strong>印刷とパブリッシュのジョブの完了</strong><button aria-label="閉じる"><svg><use href="#cross"/></svg></button></header>
              <p>エラーや警告はありません</p>
              <a href="#">印刷とパブリッシュの詳細を表示するにはここをクリック...</a>
              <svg class="tail" viewBox="0 0 20 20"><path d="M1 0l18 18V0"/></svg>
            </div>
          </div>
          <div><button aria-label="フルスクリーン"><svg><use href="#sfull"/></svg></button><button aria-label="カスタマイズ"><svg><use href="#smenu"/></svg></button></div>
        </div>
      </footer>
    </div>
  </div>
  <div class="taskbar"><i class="tk"></i><time>10:20</time></div>
</div>
</body>
</html>
```
FILE: styles.css
```css
* { box-sizing: border-box; }
body { margin: 0; overflow: hidden; font: 12px/16px "Open Sans", "Noto Sans CJK JP", sans-serif; color: #dcdcdc; font-feature-settings: "palt"; background: #212830; }
button, input, select { font: inherit; font-feature-settings: inherit; color: inherit; margin: 0; padding: 0; border: 0; background: none; border-radius: 0; outline: 0; }
p, h1 { margin: 0; font: inherit; }
i { font-style: normal; }
.sprite { display: none; }

/* icon paints */
svg { width: 18px; height: 18px; fill: none; stroke: #dfe1e4; stroke-width: 1; flex: none; display: block; }
.f { fill: #dcdcdc; stroke: none; }
.e { fill: #fff; stroke: none; }
.g { fill: #aab0b8; stroke: none; }
.d { fill: #3b4453; stroke: none; }
.b { stroke: #83bfec; }
.fb { fill: #83c3f4; stroke: none; }
.y { fill: #f3cf7d; stroke: none; }
.o { fill: #fba610; stroke: none; }
.os { stroke: #fba610; }
.os2 { stroke: #fba610; stroke-width: 2; }
.r { fill: #e4525c; stroke: none; }
.rs { stroke: #c9606a; }
.rx { fill: #f08287; stroke: none; }
path.t { fill: #d5aa77; stroke: none; }
.tl { stroke: #a98262; stroke-width: 2; }
.k { stroke: #4a5260; }
.k2 { stroke: #4a5260; stroke-width: 2; }
.gr { stroke: #52c17f; stroke-width: 2; }
.grf { fill: #66cf8b; stroke: none; }
.w { stroke: #fff; }
.w2 { stroke: #e2e4e6; stroke-width: 2; }
.w3 { stroke: #f4f4f4; stroke-width: 3; }
.ring { stroke: #dcdcdc; stroke-width: 4; }
/* one-unit strokes are drawn on pixel centres so that they stay sharp */
symbol > :not([class]), symbol > .b, symbol > .k, symbol > .w, symbol > .os, symbol > .rs { transform: translate(.5px, .5px); }
.dn { width: 8px; height: 8px; }
.dim { opacity: .35; }

.desktop { height: 100vh; display: flex; flex-direction: column; }
.workarea { flex: 1; min-height: 0; display: flex; }
.app { flex: 1; min-width: 0; display: flex; flex-direction: column; background: #212830; }

/* sliver of the window underneath */
.behind { width: 8px; display: flex; flex-direction: column; background: #f0f0f0; border-right: 2px solid #fff; }
.b1 { height: 23px; background: #fff; }
.b2 { height: 25px; background: #e1e1e1; border-bottom: 1px solid #a0a0a0; }
.b3 { height: 60px; background: #ececec; }
.b4 { height: 12px; border: solid #8c8c8c; border-width: 1px 0; background: #fafafa; }
.b5 { flex: 341; }
.b6 { flex: 177; background: #cdcdcd; }
.b7 { flex: 349; border-bottom: 53px solid #e4e4e4; }

/* title bar */
.title { height: 23px; display: flex; align-items: center; }
.qat, .info, .win, .docwin { display: flex; align-items: center; }
.title h1 { flex: 1; text-align: center; white-space: nowrap; color: #e6e6e6; }
.title h1 span { margin-left: 10px; }
.logo { display: flex; width: 46px; padding-left: 3px; align-items: center; color: #d8262c; }
.logo b { font: bold 20px/20px "Liberation Sans", sans-serif; width: 20px; color: #d8262c; }
.logo span { font-size: 9px; line-height: 10px; display: flex; flex-direction: column; align-items: center; }
.q { width: 24px; display: flex; justify-content: center; }
.a { width: 12px; display: flex; justify-content: center; }
.a.wide { width: 18px; }
.a.s { width: 9px; }
.cu { width: 10px; height: 10px; }
.share { display: flex; align-items: center; gap: 4px; color: #9cc9ea; }
.tri { border: solid transparent; border-width: 4px 0 4px 5px; border-left-color: #e0e0e0; margin-right: 5px; }
.kw { width: 178px; height: 20px; background: #454e60; padding-left: 4px; font-size: 11px; }
.kw::placeholder { color: #b9bfca; font-style: italic; opacity: 1; }
.masked { width: 110px; height: 23px; background: #000; }
.vr { width: 1px; height: 18px; background: #4d5563; margin: 0 5px 0 10px; }
.win { margin-left: 65px; padding-right: 4px; gap: 6px; }
.win svg, .docwin svg { width: 14px; height: 14px; }
.win button, .docwin button { width: 18px; display: flex; justify-content: center; }

/* menu bar */
.menu { height: 22px; display: flex; align-items: center; justify-content: space-between; border-bottom: 1px solid #434a54; color: #a7adb5; }
.items { display: grid; grid-template-columns: 72px 62px 63px 59px 65px 65px 65px 64px 67px 98px 85px 60px; padding-left: 14px; }
.items button { text-align: left; white-space: nowrap; font-size: 11px; }
.items u { text-underline-offset: 2px; }

/* drawing tabs */
.tabs { height: 25px; display: flex; align-items: flex-end; padding-left: 22px; }
.tab { position: relative; height: 22px; display: flex; align-items: center; color: #b4b9c1; z-index: 0; }
.tab::before, .tab::after, .lt::before, .lt::after { content: ""; position: absolute; z-index: -1; top: 0; bottom: 0; background: #2c3440; }
.tab::before { left: 0; right: 50%; border-top-left-radius: 9px; transform: skewX(-18deg); }
.tab::after { left: 50%; right: 0; border-top-right-radius: 9px; transform: skewX(18deg); }
.tab.start { width: 119px; padding-left: 10px; font-size: 11px; }
.tab.start::before { right: 20%; }
.tab.on { width: 130px; padding: 0 16px 0 14px; font-weight: 600; color: #fff; justify-content: space-between; }
.tab.on::before, .tab.on::after { background: #3b4453; }
.tab svg { width: 10px; height: 10px; }
.tab.add { width: 18px; height: 14px; margin: 0 0 3px 6px; justify-content: center; }

/* horizontal toolbars */
.bars { background: #3b4453; padding: 4px 0; display: flex; flex-direction: column; gap: 3px; }
.row, .tb { display: flex; }
.row { gap: 1px; }
.tb { height: 24px; border: 1px solid #262e39; align-items: center; }
.grip { width: 8px; height: 14px; flex: none; background: radial-gradient(circle, #aeb4bd 1px, transparent 1px) 1px 0/3px 3px; background-clip: content-box; padding: 0 2px 0 2px; }
button.t, .ta { width: 23px; height: 22px; flex: none; display: flex; align-items: center; justify-content: center; }
.ta { width: 13px; }
.sep { width: 2px; height: 18px; margin: 0 2px; flex: none; border-left: 1px solid #14181f; background: #c3c8cf; }
.sel { appearance: none; height: 22px; color: #1c1c1c; background: #e1e1e1 url("data:image/svg+xml,%3Csvg xmlns='http://www.w3.org/2000/svg' width='8' height='6'%3E%3Cpath d='M0 1l4 4 4-4' fill='none' stroke='%23444' /%3E%3C/svg%3E") no-repeat right 3px center; padding: 0 16px 0 9px; overflow: hidden; opacity: 1; }
.in { padding-left: 19px; }
.near { padding-left: 5px; }
.small { font-size: 11px; padding-right: 12px; }
.off { background-color: #cbcbcb; color: #858585; padding-left: 10px; background-image: none; }
.w100 { width: 100px; }
.w119 { width: 119px; }
.w124 { width: 124px; }
.w130 { width: 130px; }
.w150 { width: 150px; }
.w165 { width: 165px; }
.w175 { width: 175px; }
.w300 { width: 300px; }
.combo { display: flex; align-items: center; height: 22px; background: #e1e1e1; padding-left: 2px; }
.combo .sel { flex: 1; min-width: 0; padding-left: 5px; }
.combo .gapl { margin-left: 3px; margin-right: 1px; }
.sw { width: 14px; height: 14px; border: 1px solid #000; background: #fff; flex: none; }
.combo svg + .sw { margin-left: 1px; }
.ln { width: 60px; height: 1px; background: #000; margin-left: 3px; flex: none; }
.ln.short { width: 35px; }
.find { width: 199px; height: 22px; background: #fff; display: flex; align-items: center; padding: 0 2px 0 5px; }
.find input { flex: 1; min-width: 0; color: #222; font-size: 11px; }
.find input::placeholder { color: #6c6c6c; opacity: 1; }

/* drawing area */
.stage { flex: 1; min-height: 0; display: flex; background: #3b4453; padding-bottom: 2px; }
.side { width: 57px; display: flex; align-items: flex-start; gap: 3px; }
.vtb { width: 25px; border: 1px solid #262e39; display: flex; flex-direction: column; }
.vtb button { height: 22px; padding-right: 1px; display: flex; align-items: center; justify-content: center; }
.vgrip { height: 8px; margin: 0 4px; background: radial-gradient(circle, #aeb4bd 1px, transparent 1px) 0 1px/3px 3px; background-clip: content-box; padding: 1px 0; }
.canvas {
  flex: 1; position: relative; background-color: #212830;
  background-image: linear-gradient(90deg, #2d3540 1px, transparent 1px), linear-gradient(#2d3540 1px, transparent 1px), linear-gradient(90deg, #242c35 1px, transparent 1px), linear-gradient(#242c35 1px, transparent 1px);
  background-size: 80px 80px, 80px 80px, 16px 16px, 16px 16px;
  background-position: 67px 71px, 67px 71px, 3px 7px, 3px 7px;
}
.ucs { position: absolute; left: 15px; bottom: 12px; width: 76px; height: 80px; stroke: #f2f2f2; overflow: visible; }
.ucs text { font: 300 19px Lato, sans-serif; fill: #f2f2f2; stroke: none; }

/* command line */
.cmd { display: flex; background: #2b323e; }
.handle { width: 25px; display: flex; flex-direction: column; align-items: stretch; padding-top: 3px; gap: 4px; }
.handle button { display: flex; justify-content: center; padding-right: 2px; }
.handle svg { width: 16px; height: 16px; }
.handle .x { width: 12px; height: 14px; margin-bottom: 4px; }
.lines { flex: 1; display: flex; flex-direction: column; gap: 1px; }
.hist { background: #c6c6c6; color: #111; padding: 6px 3px 1px; line-height: 15px; }
.ask { background: #fff; height: 21px; display: flex; align-items: center; padding-left: 4px; color: #111; }
.pr { width: 18px; height: 14px; }
.tridn { border: solid transparent; border-width: 5px 4px 0; border-top-color: #dcdcdc; }
.ask .tridn { border-top-color: #555; margin: 0 5px 0 1px; }
.ask input { flex: 1; font-size: 11px; }
.ask input::placeholder { color: #5a5a5a; font-style: italic; opacity: 1; }

/* layout tabs and status bar */
.status { height: 30px; display: flex; justify-content: space-between; align-items: flex-start; border-top: 1px solid #3b4453; padding-right: 2px; }
.ltabs { display: flex; padding-left: 16px; gap: 8px; }
.lt { position: relative; z-index: 0; height: 17px; width: 64px; font-size: 11px; white-space: nowrap; color: #b0b6bf; }
.lt::before { left: 0; right: 50%; border-bottom-left-radius: 6px; transform: skewX(18deg); }
.lt::after { left: 50%; right: 0; border-bottom-right-radius: 6px; transform: skewX(-18deg); }
.lt.on { width: 44px; color: #fff; font-weight: 600; }
.lt.on::before, .lt.on::after { background: #3b4453; }
.lt.more { width: 20px; height: 15px; display: flex; align-items: center; justify-content: center; }
.lt.more svg { width: 9px; height: 9px; }
.sb { display: flex; gap: 3px; padding-top: 2px; }
.sb > div { display: flex; background: #3b4453; height: 24px; }
.sb > div > button { width: 24px; display: flex; align-items: center; justify-content: center; }
.sb > div > .sa { width: 14px; }
.sb > div > .model { width: 36px; font-size: 11px; }
.sb > div > .ratio { width: 35px; font-size: 11px; gap: 3px; }
.sb > div > .plot { width: 30px; }
.act { background: #5b8bc2; }
.act svg { stroke: #fff; }
.plotbox { position: relative; }
.balloon { position: absolute; z-index: 5; bottom: 32px; right: -52px; width: 287px; height: 81px; border: 1px solid #000; border-radius: 14px; background: #ffffe1; color: #111; padding: 8px 6px 0 15px; }
.balloon header { display: flex; align-items: center; margin: 0 0 6px -6px; }
.balloon strong { flex: 1; font-size: 11px; font-weight: 500; margin-left: 12px; white-space: nowrap; }
.balloon p, .balloon a { display: block; font-size: 11px; white-space: nowrap; margin-bottom: 4px; }
.balloon a { color: #0b0bd8; }
.inf { width: 15px; height: 15px; border-radius: 50%; background: #2449b4; color: #fff; text-align: center; font: bold 12px/15px "Liberation Serif", serif; }
.balloon header button { width: 16px; height: 16px; background: #ececec; border: 1px solid #8a8a8a; display: flex; align-items: center; justify-content: center; }
.balloon header svg { width: 12px; height: 12px; filter: brightness(0); }
.tail { position: absolute; right: 65px; top: 78px; width: 20px; height: 20px; }
.tail path { fill: #ffffe1; stroke: #000; }

/* taskbar peeking in at the bottom */
.taskbar { height: 8px; overflow: hidden; display: flex; justify-content: space-between; background: linear-gradient(90deg, #1b2a4a 8px, #21373f 8px, #20343f 50%, #1b2b47 80%, #192543); }
.tk { width: 48px; background: #506369; margin-left: 303px; }
.taskbar time { margin-right: 22px; font-size: 10px; line-height: 20px; color: #fff; }
```
